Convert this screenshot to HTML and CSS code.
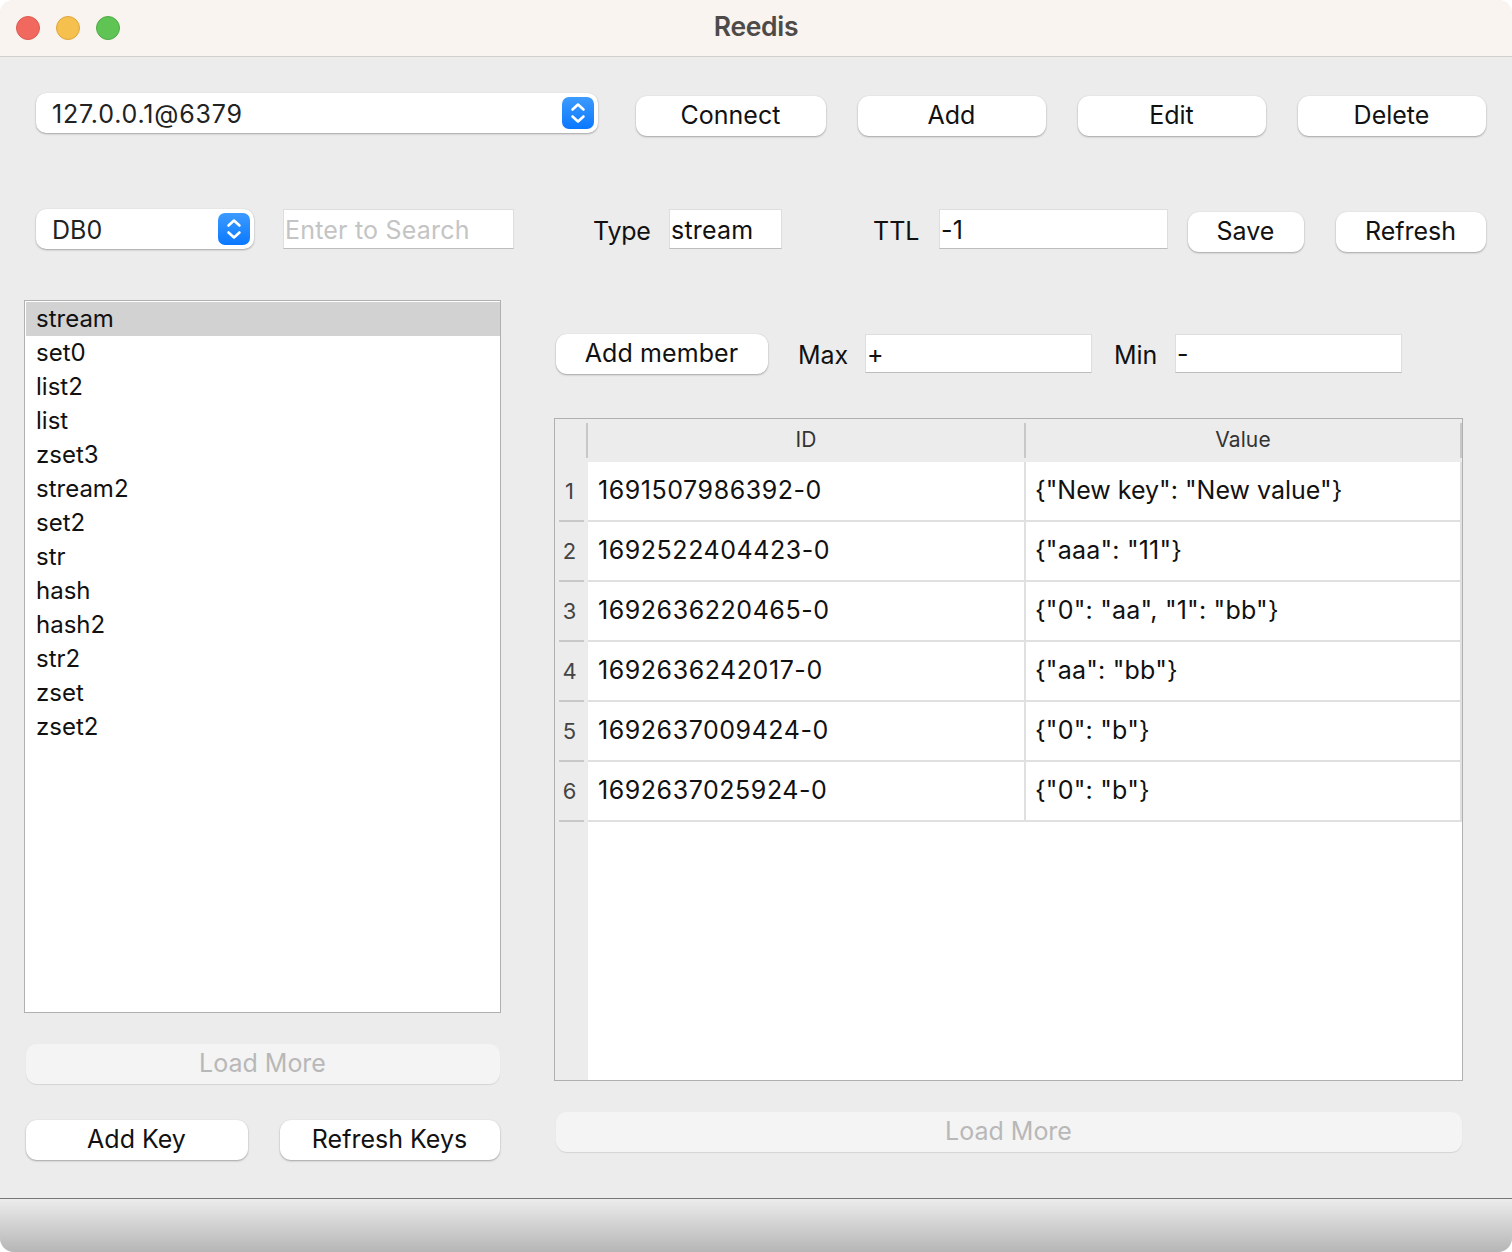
FILE: index.html
```html
<!DOCTYPE html>
<html lang="en">
<head>
<meta charset="utf-8">
<title>Reedis</title>
<link rel="stylesheet" href="styles.css">
</head>
<body>
<div class="window">
  <header class="titlebar">
    <div class="lights"><span class="light red"></span><span class="light yellow"></span><span class="light green"></span></div>
    <div class="title">Reedis</div>
  </header>
  <div class="content">
    <div class="row row-conn">
      <div class="combo w-conn"><span class="addr">127.0.0.1@6379</span>
        <svg class="stepper" viewBox="0 0 32 32"><defs><linearGradient id="g1" x1="0" y1="0" x2="0" y2="1"><stop offset="0" stop-color="#3d9bff"/><stop offset="1" stop-color="#0a78ff"/></linearGradient></defs><rect width="32" height="32" rx="7" fill="url(#g1)"/><path d="M10.500 12.500 16 7.500l5.500 5M10.500 19.500l5.500 5 5.500-5" fill="none" stroke="#fff" stroke-width="2.600" stroke-linecap="round" stroke-linejoin="round"/></svg>
      </div>
      <button class="btn w-connect">Connect</button>
      <button class="btn w-188">Add</button>
      <button class="btn w-188">Edit</button>
      <button class="btn w-188">Delete</button>
    </div>
    <div class="row row-key">
      <div class="combo w-db"><span>DB0</span>
        <svg class="stepper" viewBox="0 0 32 32"><rect width="32" height="32" rx="7" fill="url(#g1)"/><path d="M10.500 12.500 16 7.500l5.500 5M10.500 19.500l5.500 5 5.500-5" fill="none" stroke="#fff" stroke-width="2.600" stroke-linecap="round" stroke-linejoin="round"/></svg>
      </div>
      <div class="field w-search placeholder">Enter to Search</div>
      <label class="lbl lbl-type">Type</label>
      <div class="field w-type">stream</div>
      <label class="lbl lbl-ttl">TTL</label>
      <div class="field w-ttl">-1</div>
      <button class="btn w-save">Save</button>
      <button class="btn w-refresh">Refresh</button>
    </div>
    <div class="main">
      <aside class="left">
        <ul class="keys">
          <li class="sel">stream</li><li>set0</li><li>list2</li><li>list</li><li>zset3</li><li>stream2</li><li>set2</li><li>str</li><li>hash</li><li>hash2</li><li>str2</li><li>zset</li><li>zset2</li>
        </ul>
        <button class="btn off load-left">Load More</button>
        <div class="left-actions">
          <button class="btn w-addkey">Add Key</button>
          <button class="btn w-refkeys">Refresh Keys</button>
        </div>
      </aside>
      <section class="right">
        <div class="member-row">
          <button class="btn w-member">Add member</button>
          <label class="lbl lbl-max">Max</label>
          <div class="field w-range">+</div>
          <label class="lbl lbl-min">Min</label>
          <div class="field w-range">-</div>
        </div>
        <div class="table">
          <div class="thead">
            <div class="corner"></div><div class="th">ID</div><div class="th">Value</div>
          </div>
          <div class="tbody">
            <div class="tr"><div class="rh">1</div><div class="td id">1691507986392-0</div><div class="td">{"New key": "New value"}</div></div>
            <div class="tr"><div class="rh">2</div><div class="td id">1692522404423-0</div><div class="td val">{"aaa": "11"}</div></div>
            <div class="tr"><div class="rh">3</div><div class="td id">1692636220465-0</div><div class="td val">{"0": "aa", "1": "bb"}</div></div>
            <div class="tr"><div class="rh">4</div><div class="td id">1692636242017-0</div><div class="td val">{"aa": "bb"}</div></div>
            <div class="tr"><div class="rh">5</div><div class="td id">1692637009424-0</div><div class="td val">{"0": "b"}</div></div>
            <div class="tr"><div class="rh">6</div><div class="td id">1692637025924-0</div><div class="td val">{"0": "b"}</div></div>
            <div class="fill"><div class="rh-fill"></div><div class="blank"></div></div>
          </div>
        </div>
        <button class="btn off load-right">Load More</button>
      </section>
    </div>
  </div>
  <footer class="statusbar"></footer>
</div>
</body>
</html>
```
FILE: styles.css
```css
* { box-sizing: border-box; }
html, body { margin: 0; padding: 0; height: 1252px; background: #fff; overflow: hidden; }
body { font-family: "Inter", "Liberation Sans", sans-serif; font-size: 25px; color: #111; }
.window { width: 1512px; height: 1252px; display: flex; flex-direction: column; background: #ececec; border-radius: 14px; overflow: hidden; }

.titlebar { height: 57px; flex: none; position: relative; background: #f9f4f0; border-bottom: 1px solid #d2cfcd; display: flex; align-items: center; justify-content: center; padding-bottom: 4px; }
.lights { position: absolute; left: 16px; top: 16px; display: flex; gap: 16px; }
.light { width: 24px; height: 24px; border-radius: 50%; }
.red { background: #f1695e; border: 1px solid #dd5a50; }
.yellow { background: #f6c04f; border: 1px solid #dfa63c; }
.green { background: #5fc454; border: 1px solid #50ab46; }
.title { font-size: 26.500px; font-weight: 600; color: #4d4a48; letter-spacing: -0.3px; }

.content { flex: 1; display: flex; flex-direction: column; min-height: 0; }
.row { display: flex; align-items: flex-start; margin-left: 36px; }
.row-conn { margin-top: 36px; height: 43px; }
.row-key { margin-top: 73px; height: 43px; }

.combo { height: 40px; background: #fff; border-radius: 10px; box-shadow: 0 1px 2px rgba(0,0,0,.3), 0 0 1px rgba(0,0,0,.1); display: flex; align-items: center; justify-content: space-between; padding: 0 4px 0 16px; color: #222; }
.combo span { padding-top: 2px; }
.combo .addr { letter-spacing: 0.8px; }
.stepper { width: 32px; height: 32px; display: block; }
.w-conn { width: 562px; }
.w-db { width: 218px; }

.btn { display: block; height: 40px; padding: 0 1px 2px 0; border: 0; background: #fff; border-radius: 11px; box-shadow: 0 1px 2px rgba(0,0,0,.3), 0 0 1px rgba(0,0,0,.1); font: inherit; color: #111; text-align: center; }
.row-conn .btn { margin-top: 3px; }
.w-connect { width: 190px; margin-left: 38px; }
.w-188 { width: 188px; margin-left: 32px; }
.w-save { width: 116px; margin-left: 20px; margin-top: 3px; }
.w-refresh { width: 150px; margin-left: 32px; margin-top: 3px; }
.off { background: #f4f4f4; color: #b8b8b8; box-shadow: 0 1px 1px rgba(0,0,0,.1); }

.field { height: 40px; background: #fff; border: 1px solid #dedede; border-bottom: 1px solid #bdbdbd; padding: 2px 0 0 1px; display: flex; align-items: center; color: #111; letter-spacing: 0.2px; }
.placeholder { color: #c4c4c4; }
.w-search { width: 231px; margin-left: 29px; }
.w-type { width: 113px; margin-left: -1px; }
.w-ttl { width: 229px; margin-left: -1px; }
.w-range { width: 227px; margin-left: -1px; height: 39px; padding-top: 1px; }
.lbl { color: #111; line-height: 44px; }
.lbl-type { width: 76px; margin-left: 79px; letter-spacing: -0.2px; margin-right: 1px; }
.lbl-ttl { width: 66px; margin-left: 91px; margin-right: 1px; }

.main { display: flex; margin-top: 48px; flex: 1; min-height: 0; }
.left { width: 477px; margin-left: 24px; display: flex; flex-direction: column; }
.keys { list-style: none; margin: 0; padding: 1px 0 1px 1px; height: 713px; background: #fff; border: 1px solid #b0b0b0; font-size: 24px; }
.keys li { height: 34px; line-height: 34px; padding-left: 10px; color: #111; }
.keys .sel { background: #d2d2d2; }
.load-left { width: 474px; margin: 31px 0 0 2px; }
.left-actions { display: flex; margin: 36px 0 0 2px; gap: 32px; }
.w-addkey { width: 222px; }
.w-refkeys { width: 220px; }

.right { width: 909px; margin-left: 53px; display: flex; flex-direction: column; }
.member-row { display: flex; align-items: flex-start; margin: 34px 0 0 2px; height: 40px; }
.w-member { width: 212px; letter-spacing: 0.1px; }
.lbl-max { margin-left: 30px; width: 68px; letter-spacing: -0.1px; margin-top: -1px; }
.lbl-min { margin-left: 22px; width: 62px; letter-spacing: -0.1px; margin-top: -1px; }

.table { margin-top: 44px; height: 663px; border: 1px solid #b0b0b0; background: #fff; display: flex; flex-direction: column; }
.thead { height: 43px; flex: none; display: grid; grid-template-columns: 33px 438px 436px; background: #ececec; }
.corner { margin: 4px 0; border-right: 2px solid #c8c8c8; }
.th { margin: 4px 0; padding: 0 0 2px; border-right: 2px solid #c8c8c8; display: flex; align-items: center; justify-content: center; font-size: 21px; color: #333; letter-spacing: 0.1px; }
.tbody { flex: 1; display: flex; flex-direction: column; min-height: 0; }
.tr { height: 60px; flex: none; display: grid; grid-template-columns: 33px 438px 436px; }
.rh { position: relative; background: #ececec; display: flex; align-items: center; justify-content: center; padding: 0 4px 3px 0; font-size: 22px; color: #444; }
.rh::after { content: ""; position: absolute; left: 4px; right: 4px; bottom: 0; height: 2px; background: #c8c8c8; }
.td { display: flex; align-items: center; padding: 0 0 2px 9px; border-right: 2px solid #e0e0e0; border-bottom: 2px solid #e0e0e0; color: #111; }
.td.id { letter-spacing: 0.55px; padding-left: 10px; }
.td.val { letter-spacing: 0.2px; }
.fill { flex: 1; display: flex; }
.rh-fill { width: 33px; background: #ececec; }
.blank { flex: 1; background: #fff; }
.load-right { width: 906px; margin: 31px 0 0 2px; }

.statusbar { height: 54px; flex: none; border-top: 1px solid #777; background: linear-gradient(#ececec, #b6b6b6); }
```
